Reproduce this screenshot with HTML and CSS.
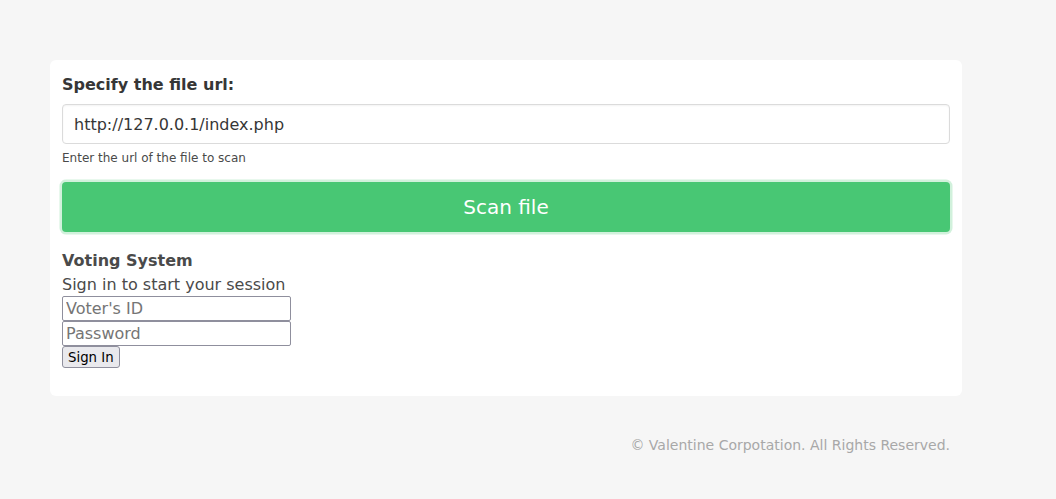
FILE: index.html
```html
<!DOCTYPE html>
<html>
<head>
<meta charset="utf-8">
<link rel="stylesheet" href="styles.css">
</head>
<body>
<div class="container">
  <div class="card">
    <div class="field">
      <label class="label">Specify the file url:</label>
      <input class="input" type="text" value="http://127.0.0.1/index.php">
      <p class="help">Enter the url of the file to scan</p>
    </div>
    <button class="scan">Scan file</button>
    <div class="voting">
      <div class="title">Voting System</div>
      <div class="subtitle">Sign in to start your session</div>
      <form class="login">
        <input class="small-input" type="text" placeholder="Voter's ID">
        <input class="small-input" type="password" placeholder="Password">
        <button class="signin" type="button">Sign In</button>
      </form>
    </div>
  </div>
  <footer class="footer">© Valentine Corpotation. All Rights Reserved.</footer>
</div>
</body>
</html>
```

FILE: styles.css
```css
html, body {
  margin: 0;
  padding: 0;
}
body {
  background: #f6f6f6;
  font-family: "DejaVu Sans", sans-serif;
  color: #4a4a4a;
  font-size: 16px;
  line-height: 1.5;
}
.container {
  width: 912px;
  margin-left: 50px;
  padding-top: 60px;
}
.card {
  background: #fff;
  border-radius: 6px;
  padding: 12px 12px 28px;
}
.field {
  margin-bottom: 15px;
}
.label {
  display: block;
  font-weight: bold;
  color: #363636;
  font-size: 16px;
  line-height: 24px;
  padding-top: 1px;
  margin-bottom: 7px;
}
.input {
  box-sizing: border-box;
  display: block;
  width: 100%;
  height: 40px;
  border: 1px solid #dbdbdb;
  border-radius: 4px;
  padding: 0 11px;
  font-family: "DejaVu Sans", sans-serif;
  font-size: 16px;
  color: #363636;
  box-shadow: inset 0 1px 2px rgba(10,10,10,.05);
  outline: none;
}
.help {
  margin: 5px 0 0;
  font-size: 12px;
  line-height: 18px;
  color: #4a4a4a;
}
.scan {
  display: block;
  box-sizing: border-box;
  width: 100%;
  height: 50px;
  background: #48c774;
  color: #fff;
  border: 1px solid transparent;
  border-radius: 4px;
  font-family: "DejaVu Sans", sans-serif;
  font-size: 20px;
  box-shadow: 0 0 0 2.5px rgba(72,199,116,.25);
  cursor: pointer;
}
.voting {
  margin-top: 17px;
}
.title {
  font-weight: bold;
  font-size: 16px;
  line-height: 24px;
}
.subtitle {
  font-size: 16px;
  line-height: 23px;
}
.login {
  margin: 0;
}
.small-input {
  display: block;
  box-sizing: border-box;
  width: 229px;
  height: 25px;
  margin: 0;
  font-family: "DejaVu Sans", sans-serif;
  font-size: 16px;
  padding: 1px 3px;
  border: 1px solid #8f8f9d;
  border-radius: 2px;
  color: #000;
}
.small-input::placeholder {
  color: #757575;
}
.signin {
  display: block;
  margin: 0;
  height: 22px;
  padding: 0 5px;
  font-family: "DejaVu Sans", sans-serif;
  font-size: 13.3px;
  background: #e9e9ed;
  border: 1px solid #8f8f9d;
  border-radius: 3px;
  color: #000;
}
.footer {
  padding: 37px 12px 0;
  text-align: right;
  font-size: 14px;
  line-height: 24px;
  color: #a8a8a8;
}
```
